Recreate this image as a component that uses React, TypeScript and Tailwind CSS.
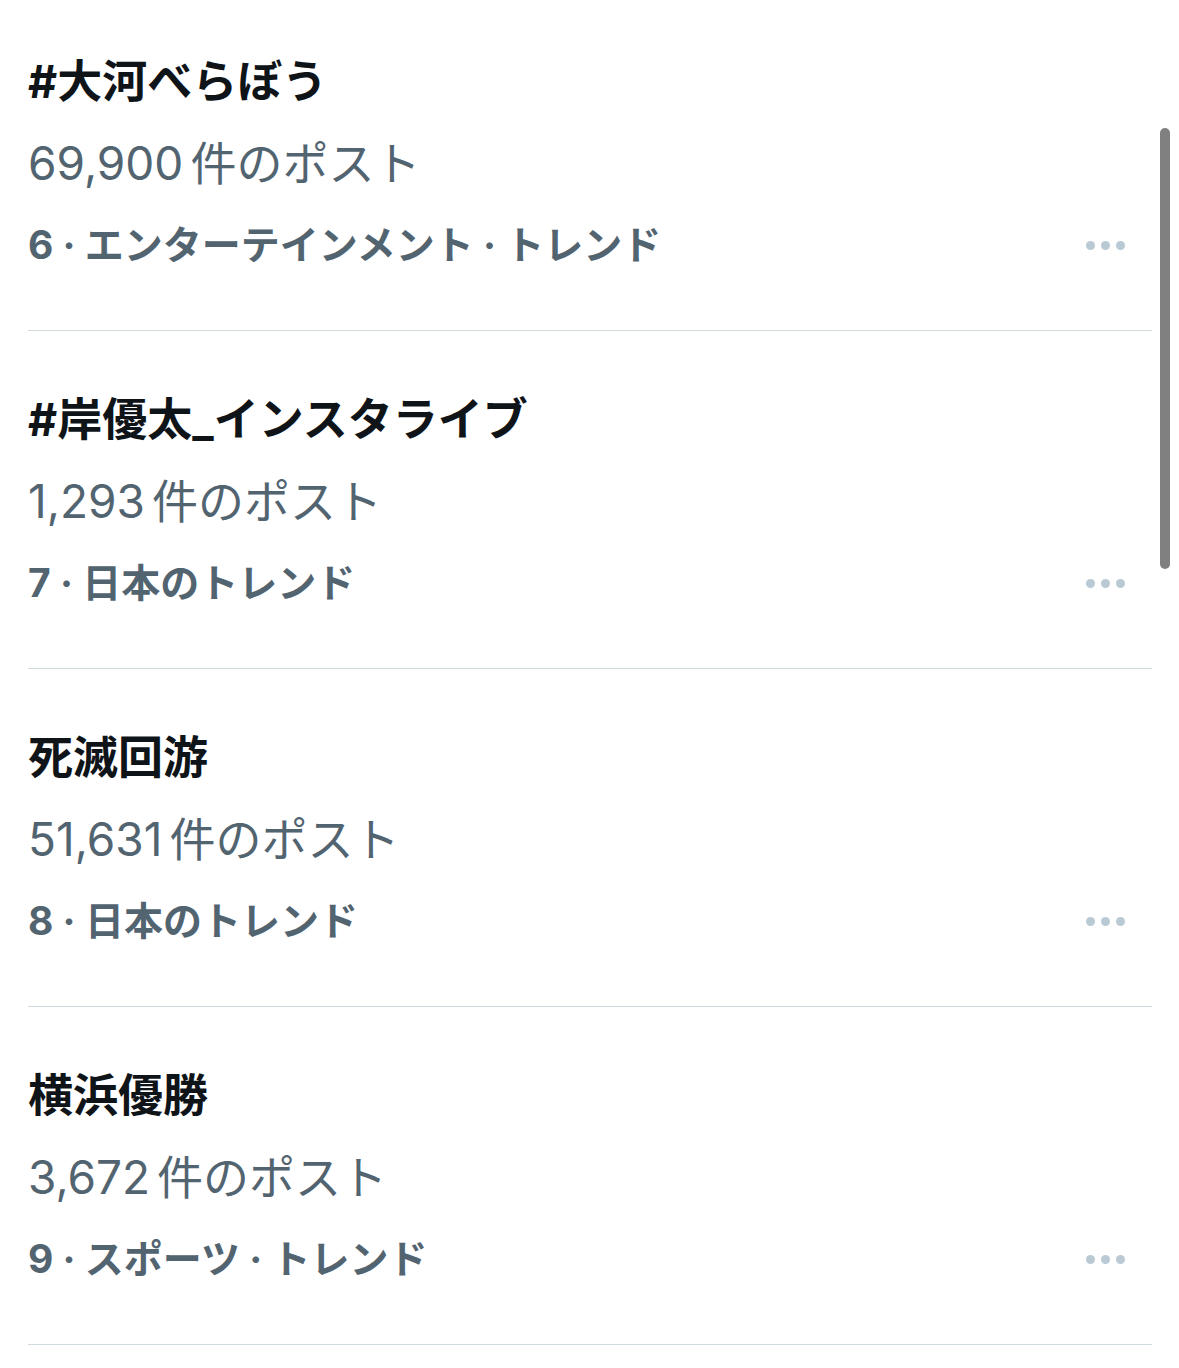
import React from "react";

const trends = [
  { title: "#大河べらぼう", num: "69,900", meta: "6 · エンターテインメント · トレンド" },
  { title: "#岸優太_インスタライブ", num: "1,293", meta: "7 · 日本のトレンド" },
  { title: "死滅回游", num: "51,631", meta: "8 · 日本のトレンド" },
  { title: "横浜優勝", num: "3,672", meta: "9 · スポーツ · トレンド" },
];

function MoreDots() {
  return (
    <div className="flex items-center gap-[6px] mr-[27px]">
      <span className="w-[9px] h-[9px] rounded-full bg-[#b9cad4]" />
      <span className="w-[9px] h-[9px] rounded-full bg-[#b9cad4]" />
      <span className="w-[9px] h-[9px] rounded-full bg-[#b9cad4]" />
    </div>
  );
}

export default function App() {
  return (
    <div
      className="relative w-[1179px] h-[1368px] overflow-hidden bg-white"
      style={{ fontFamily: 'Inter, "Noto Sans CJK JP", sans-serif' }}
    >
      <div className="mt-[-7px] pl-7 pr-[27px]">
        {trends.map((t) => (
          <div key={t.title} className="border-b border-[#cfd9de] pt-[48px] pb-[46px]">
            <div className="h-[81px] flex items-center text-[45px] font-bold text-[#0f1419]">
              {t.title}
            </div>
            <div className="h-[81px] pt-[1px] flex items-center text-[46px] text-[#536471]">
              <span className="mr-[7px]">{t.num}</span>
              <span>件のポスト</span>
            </div>
            <div className="h-[81px] pt-[3px] flex items-center justify-between">
              <span className="text-[39px] font-bold text-[#536471]">{t.meta}</span>
              <MoreDots />
            </div>
          </div>
        ))}
      </div>
      {/* scrollbar */}
      <div className="absolute left-[1160px] top-[128px] w-[10px] h-[441px] rounded-full bg-[#808080]" />
    </div>
  );
}
